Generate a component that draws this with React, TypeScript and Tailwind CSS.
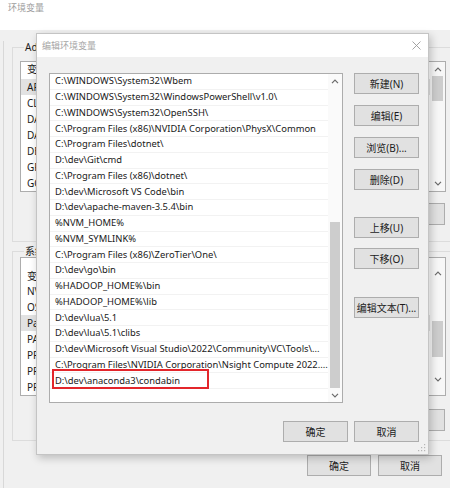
import clsx from 'clsx'

const paths = [
  'C:\\WINDOWS\\System32\\Wbem',
  'C:\\WINDOWS\\System32\\WindowsPowerShell\\v1.0\\',
  'C:\\WINDOWS\\System32\\OpenSSH\\',
  'C:\\Program Files (x86)\\NVIDIA Corporation\\PhysX\\Common',
  'C:\\Program Files\\dotnet\\',
  'D:\\dev\\Git\\cmd',
  'C:\\Program Files (x86)\\dotnet\\',
  'D:\\dev\\Microsoft VS Code\\bin',
  'D:\\dev\\apache-maven-3.5.4\\bin',
  '%NVM_HOME%',
  '%NVM_SYMLINK%',
  'C:\\Program Files (x86)\\ZeroTier\\One\\',
  'D:\\dev\\go\\bin',
  '%HADOOP_HOME%\\bin',
  '%HADOOP_HOME%\\lib',
  'D:\\dev\\lua\\5.1',
  'D:\\dev\\lua\\5.1\\clibs',
  'D:\\dev\\Microsoft Visual Studio\\2022\\Community\\VC\\Tools\\...',
  'C:\\Program Files\\NVIDIA Corporation\\Nsight Compute 2022....',
  'D:\\dev\\anaconda3\\condabin',
]

const userVars = ['APPDATA_HOME', 'CLASSPATH', 'DATA_PATH', 'DASHSCOPE_KEY', 'DEEPSEEK_KEY', 'GRADLE_HOME', 'GOPATH']
const sysVars = ['NVCUDA_ROOT', 'OS', 'Path', 'PATHEXT', 'PROCESSOR_ARCH', 'PROCESSOR_ID', 'PROCESSOR_LEVEL']

function Chevron({ down }: { down?: boolean }) {
  return (
    <svg width="8" height="5" viewBox="0 0 8 5" className={clsx(down && 'rotate-180')}>
      <path d="M1 4.2 L4 1.2 L7 4.2" fill="none" stroke="#6a6a6a" strokeWidth="1.2" />
    </svg>
  )
}

function Btn({ label, className }: { label: string; className?: string }) {
  return (
    <button
      className={clsx(
        'flex items-center justify-center h-[21px] shrink-0 border border-[#adadad] bg-[#e1e1e1] text-[10px] leading-none text-[#1b1b1b]',
        className
      )}
    >
      {label}
    </button>
  )
}

// background list (用户变量 / 系统变量)
function VarList({ names, selected, header, thumbTop, thumbH, barTop }: {
  names: string[]
  selected: string
  header: string
  thumbTop: string
  thumbH: string
  barTop: string
}) {
  return (
    <div className="flex w-[426px] border border-[#adadad] bg-white">
      <div className="flex-1 flex flex-col">
        <div className={clsx('flex items-start pl-[6px] text-[10px] leading-[14px]', header)}>
          <span className="w-[120px]">变量</span>
          <span>值</span>
        </div>
        {names.map((n) => (
          <div
            key={n}
            className={clsx('h-[16px] flex items-center pl-[6px] whitespace-nowrap', n === selected && 'bg-[#e2e2e2]')}
          >
            {n}
          </div>
        ))}
      </div>
      <div className={clsx('w-[15px] flex flex-col bg-[#f7f7f7]', barTop)}>
        <div className="h-[14px] flex items-center justify-center"><Chevron /></div>
        <div className="flex-1 px-[2px]">
          <div className={clsx('bg-[#cdcdcd]', thumbTop, thumbH)} />
        </div>
        <div className="h-[15px] flex items-center justify-center"><Chevron down /></div>
      </div>
    </div>
  )
}

export default function App() {
  return (
    <div className="relative w-[450px] h-[488px] overflow-hidden bg-[#f0f0f0] font-['Noto_Sans','Noto_Sans_CJK_SC',sans-serif] text-[10px] text-[#1b1b1b]">
      {/* 环境变量 window */}
      <div className="h-[30px] bg-white pl-[8px] pt-[2px] text-[9px] leading-[12px] text-[#9d9d9d]">环境变量</div>
      <div className="ml-[3px] border-l border-[#d8d8d8] h-[458px] pl-[8px]">
        <fieldset className="mt-[11px] w-[460px] border border-[#dcdcdc] pl-[7px] pb-[16px]">
          <legend className="ml-[4px] px-[1px] leading-[12px]">Administrator 的用户变量</legend>
          <div className="mt-[8px]">
            <VarList names={userVars} selected="APPDATA_HOME" header="h-[17px]" thumbTop="mt-0" thumbH="h-[25px]" barTop="" />
          </div>
          <div className="mt-[11px] w-[426px] flex justify-end gap-[7px]">
            <Btn label="新建(N)..." className="w-[75px] h-[22px]" />
            <Btn label="编辑(E)..." className="w-[75px] h-[22px]" />
            <Btn label="删除(D)" className="w-[75px] h-[22px] mr-[1px]" />
          </div>
        </fieldset>
        <fieldset className="mt-[3px] w-[460px] border border-[#dcdcdc] pl-[7px] pb-[9px]">
          <legend className="ml-[4px] px-[1px] leading-[12px]">系统变量(S)</legend>
          <div className="mt-0">
            <VarList names={sysVars} selected="Path" header="h-[25px] pt-[11px]" thumbTop="mt-[41px]" thumbH="h-[36px]" barTop="pt-[8px] pb-[8px]" />
          </div>
          <div className="mt-[13px] w-[426px] flex justify-end gap-[7px]">
            <Btn label="新建(W)..." className="w-[75px] h-[22px]" />
            <Btn label="编辑(I)..." className="w-[75px] h-[22px]" />
            <Btn label="删除(L)" className="w-[75px] h-[22px] mr-[1px]" />
          </div>
        </fieldset>
        <div className="mt-[14px] w-[430px] flex justify-end gap-[7px]">
          <Btn label="确定" className="w-[64px]" />
          <Btn label="取消" className="w-[64px]" />
        </div>
      </div>

      {/* 编辑环境变量 dialog */}
      <div className="absolute left-[36px] top-[33px] w-[393px] h-[422px] border border-[#c4c4c4] bg-[#f0f0f0] shadow-[2px_3px_8px_rgba(0,0,0,0.22)]">
        <div className="h-[23px] bg-white flex items-center justify-between pl-[5px] pr-[7px]">
          <span className="text-[9px] text-[#a6a6a6]">编辑环境变量</span>
          <svg width="9" height="9" viewBox="0 0 9 9">
            <path d="M0.5 0.5 L8.5 8.5 M8.5 0.5 L0.5 8.5" stroke="#9a9a9a" strokeWidth="0.9" />
          </svg>
        </div>
        <div className="pl-[12px] pt-[16px]">
          <div className="flex">
            <div className="relative flex w-[294px] h-[330px] border border-[#acacac] bg-white">
              <div className="flex-1 flex flex-col text-[9.4px] text-[#202020]">
                {paths.map((p) => (
                  <div
                    key={p}
                    className="h-[15.75px] flex items-center pl-[5px] whitespace-nowrap overflow-hidden border-b border-[#f2f2f2]"
                  >
                    {p}
                  </div>
                ))}
              </div>
              <div className="w-[14px] flex flex-col bg-[#fafafa]">
                <div className="h-[15px] flex items-center justify-center"><Chevron /></div>
                <div className="flex-1 flex flex-col justify-end px-[2px]">
                  <div className="h-[166px] bg-[#cdcdcd]" />
                </div>
                <div className="h-[14px] flex items-center justify-center"><Chevron down /></div>
              </div>
              {/* highlight around the new entry */}
              <div className="absolute left-[2px] top-[295px] w-[157px] h-[20px] border-2 border-[#e3262b]" />
            </div>
            <div className="ml-[11px] w-[65px] flex flex-col">
              <Btn label="新建(N)" className="w-[65px]" />
              <Btn label="编辑(E)" className="w-[65px] mt-[11px]" />
              <Btn label="浏览(B)..." className="w-[65px] mt-[11px]" />
              <Btn label="删除(D)" className="w-[65px] mt-[11px]" />
              <Btn label="上移(U)" className="w-[65px] mt-[27px]" />
              <Btn label="下移(O)" className="w-[65px] mt-[10px]" />
              <Btn label="编辑文本(T)..." className="w-[65px] mt-[28px]" />
            </div>
          </div>
          <div className="mt-[18px] w-[370px] flex justify-end gap-[6px]">
            <Btn label="确定" className="w-[65px]" />
            <Btn label="取消" className="w-[65px]" />
          </div>
        </div>
        <svg width="8" height="8" viewBox="0 0 8 8" className="absolute right-[2px] bottom-[2px]">
          <rect x="6" y="0" width="1.2" height="1.2" fill="#b5b5b5" />
          <rect x="3" y="3" width="1.2" height="1.2" fill="#b5b5b5" />
          <rect x="6" y="3" width="1.2" height="1.2" fill="#b5b5b5" />
          <rect x="0" y="6" width="1.2" height="1.2" fill="#b5b5b5" />
          <rect x="3" y="6" width="1.2" height="1.2" fill="#b5b5b5" />
          <rect x="6" y="6" width="1.2" height="1.2" fill="#b5b5b5" />
        </svg>
      </div>
    </div>
  )
}
